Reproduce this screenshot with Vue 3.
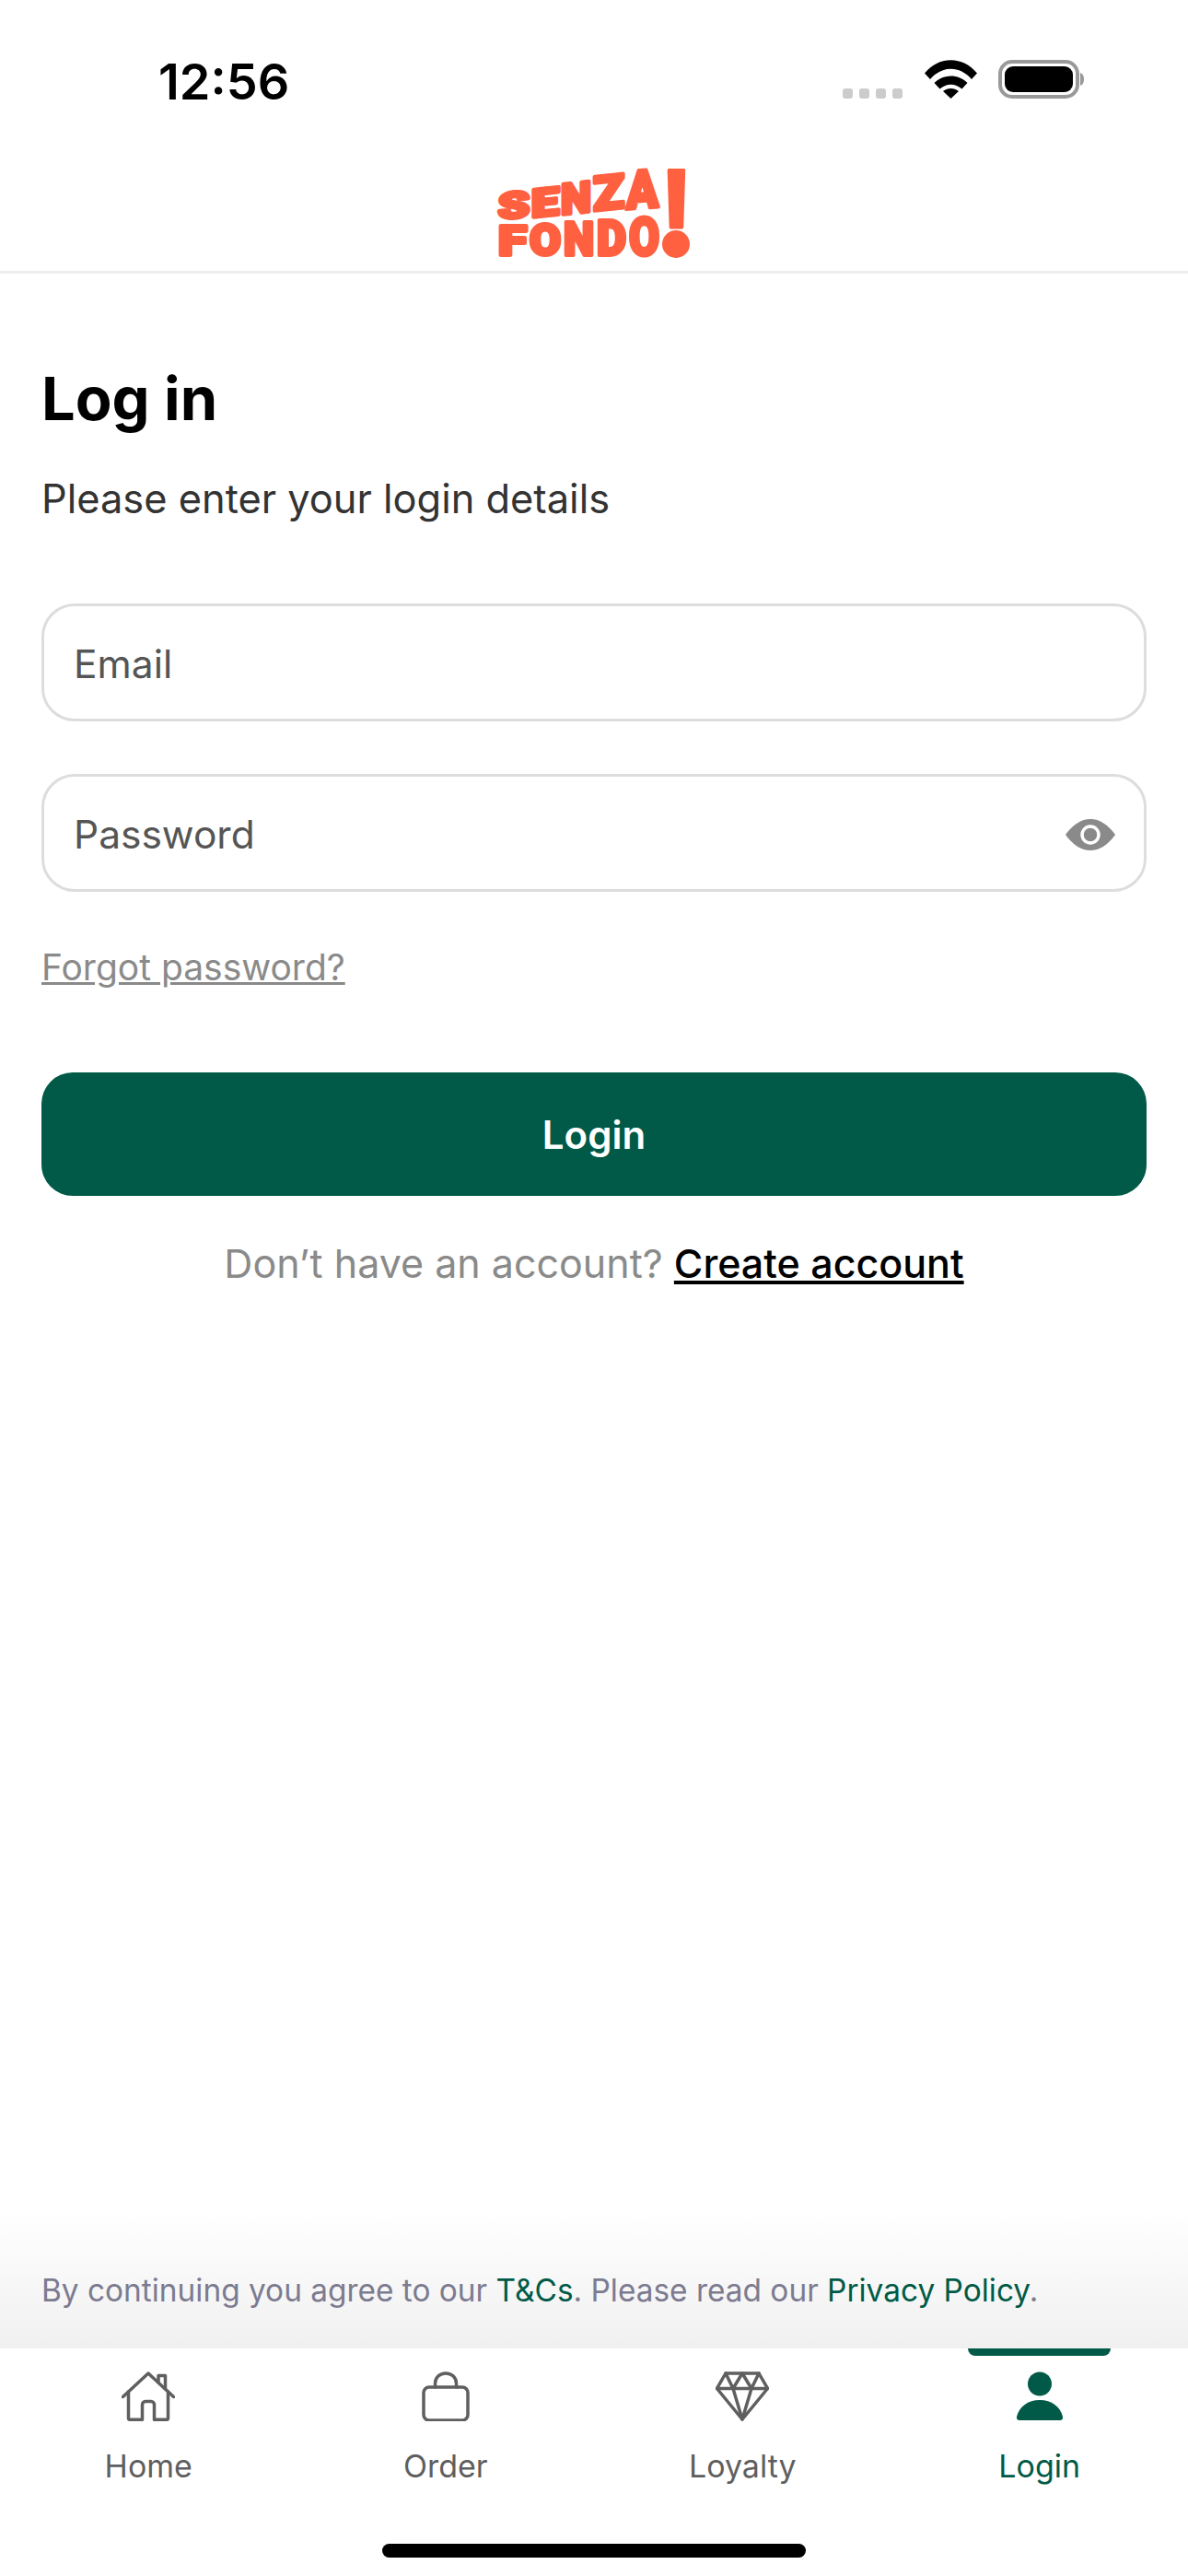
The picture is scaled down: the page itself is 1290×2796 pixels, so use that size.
<template>
  <div class="screen">
    <div class="status">
      <span class="status__time">12:56</span>
      <div class="status__right">
        <div class="signal"><span v-for="n in 4" :key="n" class="signal__dot"></span></div>
        <svg class="wifi" width="57" height="42" viewBox="0 0 57 42">
          <path d="M0 14.500C15.500-4.500 41.500-4.500 57 14.500L51 21C38 6 19 6 6 21Z" />
          <path d="M10.500 25C20 15 37 15 46.500 25L40.500 31.500C33 25 24 25 16.500 31.500Z" />
          <path d="M20 34C25 30 32 30 37 34L28.500 42Z" />
        </svg>
        <svg class="battery" width="93" height="42" viewBox="0 0 93 42">
          <rect x="2" y="2" width="84" height="38" rx="13" fill="none" stroke="#999" stroke-width="4" />
          <rect x="7" y="7" width="74" height="28" rx="9" fill="#000" />
          <path d="M89 14C92 15 93 18 93 21C93 24 92 27 89 28Z" fill="#999" />
        </svg>
      </div>
    </div>

    <header class="header">
      <svg class="logo" width="212" height="97" viewBox="0 0 212 97">
        <g class="logo__text">
          <text v-for="l in logoLetters" :key="l.x + l.c" :transform="l.t" :textLength="l.w" lengthAdjust="spacingAndGlyphs" :font-size="l.fs">{{ l.c }}</text>
          <text transform="translate(181 92)" font-size="126" textLength="26" lengthAdjust="spacingAndGlyphs">!</text>
        </g>
        <circle cx="194" cy="82" r="15" fill="#ff6040" />
        <path d="M187 69l3 2 3-4 2 4 4-2-1 4h-10z" fill="#ff6040" />
      </svg>
    </header>

    <main class="main">
      <h1 class="title">Log in</h1>
      <p class="subtitle">Please enter your login details</p>

      <div class="field">Email</div>
      <div class="field field--password">
        Password
        <svg class="eye" width="54" height="36" viewBox="0 0 54 36">
          <path d="M0 18C8 7 17 1 27 1s19 6 27 17c-8 11-17 17-27 17S8 29 0 18Z" fill="#8a8a8a" />
          <circle cx="27" cy="18" r="9" fill="#8a8a8a" stroke="#fff" stroke-width="3.500" />
        </svg>
      </div>

      <a class="forgot">Forgot password?</a>

      <button class="btn">Login</button>

      <p class="signup">Don’t have an account? <a class="signup__link">Create account</a></p>
    </main>

    <div class="terms">
      By continuing you agree to our <a>T&amp;Cs</a>. Please read our <a>Privacy Policy</a>.
    </div>

    <nav class="tabs">
      <div class="tab">
        <svg class="tab__icon" width="58" height="54" viewBox="0 0 58 54" fill="none" stroke="currentColor" stroke-width="3.500" stroke-linecap="round" stroke-linejoin="round">
          <path d="M1.500 27.500L29 2l27.500 25.500" />
          <path d="M7.500 22v29c0 .8.500 1.300 1.300 1.300h13.700V36c0-2 1.500-3.500 3.500-3.500h6c2 0 3.500 1.500 3.500 3.500v16.300h13.700c.8 0 1.300-.5 1.300-1.300V22" />
          <path d="M40 12V4.500h7.500V19" />
        </svg>
        <span>Home</span>
      </div>
      <div class="tab">
        <svg class="tab__icon" width="52" height="54" viewBox="0 0 52 54" fill="none" stroke="currentColor" stroke-width="3.500" stroke-linecap="round" stroke-linejoin="round">
          <rect x="2" y="17" width="48" height="36" rx="6" />
          <path d="M14.500 17v-4C14.500 6.500 19.500 2 26 2s11.500 4.500 11.500 11v4" />
        </svg>
        <span>Order</span>
      </div>
      <div class="tab">
        <svg class="tab__icon" width="58" height="54" viewBox="0 0 58 54" fill="none" stroke="currentColor" stroke-width="3.500" stroke-linecap="round" stroke-linejoin="round">
          <path d="M11 2h36l9.500 16.500L29 52 1.500 18.500Z" />
          <path d="M1.500 18.500h55" />
          <path d="M11 2l8 16.500L29 2l10 16.500L47 2" />
          <path d="M19 18.500L29 52l10-33.500" />
        </svg>
        <span>Loyalty</span>
      </div>
      <div class="tab tab--active">
        <svg class="tab__icon" width="50" height="54" viewBox="0 0 50 54" fill="currentColor">
          <circle cx="25" cy="13.500" r="13" />
          <path d="M0 49C3 38 12 31 25 31s22 7 25 18c.6 2.500-.8 4-3 4H3c-2.200 0-3.600-1.500-3-4Z" />
        </svg>
        <span>Login</span>
      </div>
    </nav>

    <div class="home-bar"><span class="home-bar__pill"></span></div>
  </div>
</template>

<script setup>
// letters of the logo: left, baseline, width, height, skew. The stroke on the
// text fattens each glyph by 2px a side, so the box is shrunk by as much.
const letter = (c, x, y, w, h, skew) => ({
  c,
  x,
  w: w - 2,
  fs: (h - 4) / 0.711,
  t: `translate(${x + 1} ${y - 2}) skewY(${skew})`,
})

const logoLetters = [
  letter('S', 0, 57, 36, 32, -5),
  letter('E', 36, 55, 32, 34, -6),
  letter('N', 68, 52, 35, 37, -6),
  letter('Z', 103, 48, 36, 41, -6),
  letter('A', 139, 46, 37, 45, -4),
  letter('F', 0, 96, 33, 36, 0),
  letter('O', 34, 96, 36, 38, 0),
  letter('N', 71, 96, 35, 40, 0),
  letter('D', 107, 96, 34, 42, 0),
  letter('O', 142, 96, 35, 45, 0),
]
</script>

<style scoped>
.screen {
  display: flex;
  flex-direction: column;
  width: 1290px;
  height: 2796px;
  background: #fff;
  font-family: Inter, "Liberation Sans", sans-serif;
  overflow: hidden;
}
.status {
  display: flex;
  justify-content: space-between;
  align-items: flex-start;
  height: 183px;
  padding: 58px 113px 0 172px;
  box-sizing: border-box;
}
.status__time {
  font-size: 54px;
  line-height: 62px;
  font-weight: 600;
  color: #000;
}
.status__right {
  display: flex;
  align-items: flex-end;
  height: 49px;
}
.signal {
  display: flex;
  gap: 7px;
  margin-right: 24px;
}
.signal__dot {
  width: 11px;
  height: 11px;
  border-radius: 3px;
  background: #ccc;
}
.wifi {
  margin-right: 23px;
}
.header {
  display: flex;
  justify-content: center;
  height: 114px;
  box-sizing: border-box;
  border-bottom: 3px solid #eee;
}
.logo {
  margin-left: 1px;
  overflow: visible;
}
.logo__text {
  font-family: Roboto, sans-serif;
  font-weight: 900;
  fill: #ff6040;
  stroke: #ff6040;
  stroke-width: 4;
  stroke-linejoin: round;
}
.main {
  display: flex;
  flex-direction: column;
  flex: 1;
  padding: 0 45px;
}
.title {
  margin: 96px 0 0;
  font-size: 65px;
  line-height: 80px;
  font-weight: 700;
  color: #000;
}
.subtitle {
  margin: 41px 0 0;
  font-size: 43.400px;
  line-height: 54px;
  color: #333;
}
.field {
  position: relative;
  display: flex;
  align-items: center;
  height: 128px;
  margin-top: 57px;
  padding: 2px 32px 0;
  box-sizing: border-box;
  border: 3px solid #ddd;
  border-radius: 36px;
  font-size: 42.500px;
  color: #555;
}
.subtitle + .field {
  margin-top: 87px;
}
.eye {
  position: absolute;
  right: 31px;
  top: 45px;
}
.forgot {
  align-self: flex-start;
  margin-top: 59px;
  font-size: 39px;
  line-height: 46px;
  color: #8a8a8a;
  text-decoration: underline;
}
.btn {
  height: 134px;
  margin-top: 91px;
  border: 0;
  border-radius: 34px;
  background: #015a47;
  color: #fff;
  font-family: inherit;
  font-size: 42px;
  font-weight: 600;
}
.signup {
  margin: 46px 0 0;
  text-align: center;
  font-size: 43px;
  line-height: 54px;
  color: #8a8a8a;
}
.signup__link {
  color: #000;
  font-weight: 500;
  text-decoration: underline;
}
.terms {
  height: 149px;
  padding: 64px 45px 0;
  box-sizing: border-box;
  background: linear-gradient(#fff, #f0f0f0);
  font-size: 33.400px;
  line-height: 44px;
  color: #7c7b90;
}
.terms a {
  color: #015a47;
}
.tabs {
  display: grid;
  grid-template-columns: repeat(4, 1fr);
  height: 160px;
}
.tab {
  position: relative;
  display: flex;
  flex-direction: column;
  align-items: center;
  padding-top: 25px;
  color: #5f5f5f;
  font-size: 34px;
  line-height: 40px;
}
.tab__icon {
  margin-bottom: 29px;
}
.tab--active {
  color: #015a47;
}
.tab--active::before {
  content: "";
  position: absolute;
  top: 0;
  left: 83px;
  width: 155px;
  height: 8px;
  border-radius: 0 0 8px 8px;
  background: #015a47;
}
.home-bar {
  display: flex;
  justify-content: center;
  flex: none;
  height: 87px;
  padding-top: 52px;
  box-sizing: border-box;
}
.home-bar__pill {
  width: 460px;
  height: 15px;
  border-radius: 8px;
  background: #000;
}
</style>
